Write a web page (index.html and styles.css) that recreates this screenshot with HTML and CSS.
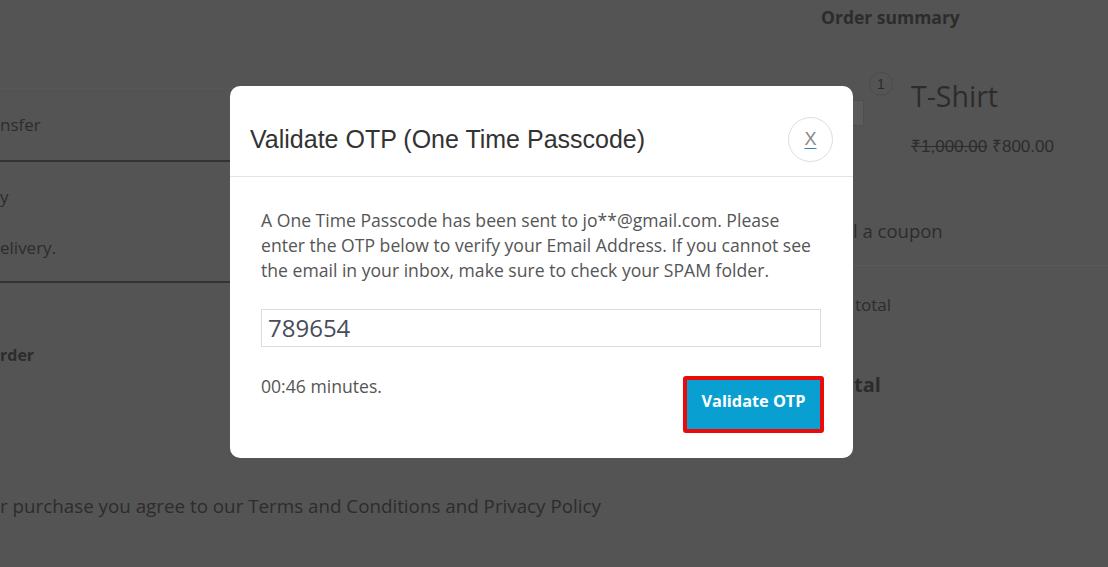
FILE: index.html
```html
<!DOCTYPE html>
<html>
<head>
<meta charset="utf-8">
<link rel="stylesheet" href="styles.css">
</head>
<body>
<div class="page">
  <div class="left">
    <div class="pay-box">
      <div class="pay-row first"><span>nsfer</span></div>
      <div class="pay-row second">
        <span class="l1">y</span>
        <span class="l2">elivery.</span>
      </div>
    </div>
    <div class="place">rder</div>
    <div class="terms">r purchase you agree to our Terms and Conditions and Privacy Policy</div>
  </div>
  <div class="right">
    <div class="sum-title">Order summary</div>
    <div class="item">
      <div class="thumb"></div>
      <div class="badge">1</div>
      <div class="item-info">
        <div class="item-name">T-Shirt</div>
        <div class="prices"><s>₹1,000.00</s> <span>₹800.00</span></div>
      </div>
    </div>
    <div class="coupon">l a coupon</div>
    <div class="subtotal">total</div>
    <div class="total">tal</div>
  </div>
</div>

<div class="overlay">
  <div class="modal">
    <div class="modal-head">
      <h2 class="modal-title">Validate OTP (One Time Passcode)</h2>
      <button class="close"><span>X</span></button>
    </div>
    <div class="modal-body">
      <p class="msg">A One Time Passcode has been sent to jo**@gmail.com. Please enter the OTP below to verify your Email Address. If you cannot see the email in your inbox, make sure to check your SPAM folder.</p>
      <input class="otp" type="text" value="789654">
      <div class="foot">
        <span class="timer">00:46 minutes.</span>
        <button class="validate">Validate OTP</button>
      </div>
    </div>
  </div>
</div>
</body>
</html>
```

FILE: styles.css
```css
html, body {
  margin: 0;
  padding: 0;
  width: 1108px;
  height: 567px;
  overflow: hidden;
  background: #545454;
  font-family: "Open Sans", "Liberation Sans", sans-serif;
  color: #2c2c2c;
}

.page {
  display: flex;
  height: 567px;
}

.left {
  width: 800px;
  flex: none;
  font-size: 17px;
}

.pay-box {
  margin-top: 88px;
  width: 240px;
  border-top: 1px solid #575757;
}

.pay-row {
  border-bottom: 2px solid #333;
}

.pay-row.first {
  height: 73px;
  display: flex;
  align-items: center;
  padding-top: 0;
  box-sizing: border-box;
}

.pay-row.second {
  height: 121px;
  display: flex;
  flex-direction: column;
  padding-top: 22px;
  box-sizing: border-box;
  gap: 26px;
}

.pay-row span { line-height: 25px; }

.place {
  margin-top: 60px;
  font-weight: 700;
  font-size: 16px;
  line-height: 24px;
}

.terms {
  margin-top: 126px;
  font-size: 18.8px;
  line-height: 26px;
  white-space: nowrap;
}

.right {
  flex: 1;
  padding-left: 21px;
  position: relative;
}

.sum-title {
  margin-top: 5px;
  font-weight: 700;
  font-size: 17.5px;
  line-height: 24px;
}

.item {
  display: flex;
  margin-top: 43px;
  position: relative;
  padding-left: 90px;
}

.thumb {
  position: absolute;
  left: 1px;
  top: 28px;
  width: 40px;
  height: 24px;
  background: #5b5b5b;
  border: 1px solid #4f4f4f;
}

.badge {
  position: absolute;
  left: 48px;
  top: 0;
  width: 22px;
  height: 22px;
  border: 1px solid #4c4c4c;
  border-radius: 50%;
  font-family: "Liberation Sans", sans-serif;
  font-size: 14px;
  line-height: 22px;
  text-align: center;
  color: #2a2a2a;
}

.item-name {
  font-size: 28.5px;
  line-height: 36px;
  margin-top: 6px;
}

.prices {
  margin-top: 21px;
  font-size: 17px;
  line-height: 24px;
  font-family: "Liberation Sans", sans-serif;
}

.prices s { color: #2c2c2c; }

.coupon {
  margin-top: 59px;
  padding-left: 32px;
  font-size: 18.5px;
  line-height: 26px;
  padding-bottom: 21px;
  border-bottom: 1px solid #5a5a5a;
}

.subtotal {
  margin-top: 26px;
  padding-left: 34px;
  font-size: 17px;
  line-height: 26px;
}

.total {
  margin-top: 52px;
  padding-left: 33px;
  font-weight: 700;
  font-size: 20px;
  line-height: 30px;
}

/* overlay + modal */
.overlay {
  position: fixed;
  inset: 0;
}

.modal {
  position: absolute;
  left: 230px;
  top: 86px;
  width: 623px;
  height: 372px;
  background: #fff;
  border-radius: 10px;
  box-sizing: border-box;
}

.modal-head {
  height: 91px;
  border-bottom: 1px solid #e3e3e3;
  display: flex;
  align-items: center;
  justify-content: space-between;
  padding: 17px 20px 0 20px;
  box-sizing: border-box;
}

.modal-title {
  margin: 0;
  font-family: "Liberation Sans", Arial, sans-serif;
  font-weight: 400;
  font-size: 25px;
  color: #333;
  margin-top: 0;
}

.close {
  width: 45px;
  height: 45px;
  border-radius: 50%;
  border: 1px solid #dedede;
  background: #fff;
  padding: 0;
  display: flex;
  align-items: center;
  justify-content: center;
}

.close span {
  font-family: "Liberation Sans", Arial, sans-serif;
  font-size: 18px;
  color: #888;
  text-decoration: underline;
  text-decoration-color: #3a7fc6;
  text-underline-offset: 3px;
}

.modal-body {
  padding: 31px 32px 0 31px;
}

.msg {
  margin: 0;
  font-size: 17.6px;
  line-height: 25px;
  color: #555;
}

.otp {
  display: block;
  margin-top: 26px;
  width: 560px;
  height: 38px;
  box-sizing: border-box;
  border: 1px solid #dcdcdc;
  padding: 0 6px 1px 6px;
  font-family: "Open Sans", sans-serif;
  font-size: 24px;
  color: #474d59;
  outline: none;
}

.foot {
  margin-top: 29px;
  display: flex;
  justify-content: space-between;
  align-items: flex-start;
}

.timer {
  margin-top: -2px;
  font-size: 17.6px;
  line-height: 25px;
  color: #555;
}

.validate {
  width: 141px;
  height: 57px;
  margin-right: -3px;
  box-sizing: border-box;
  border: 4px solid #ea0a0a;
  border-radius: 3px;
  background: #0a9fd1;
  color: #fff;
  font-family: "Open Sans", sans-serif;
  font-weight: 700;
  font-size: 16.3px;
  padding: 0 0 7px 0;
}
```
